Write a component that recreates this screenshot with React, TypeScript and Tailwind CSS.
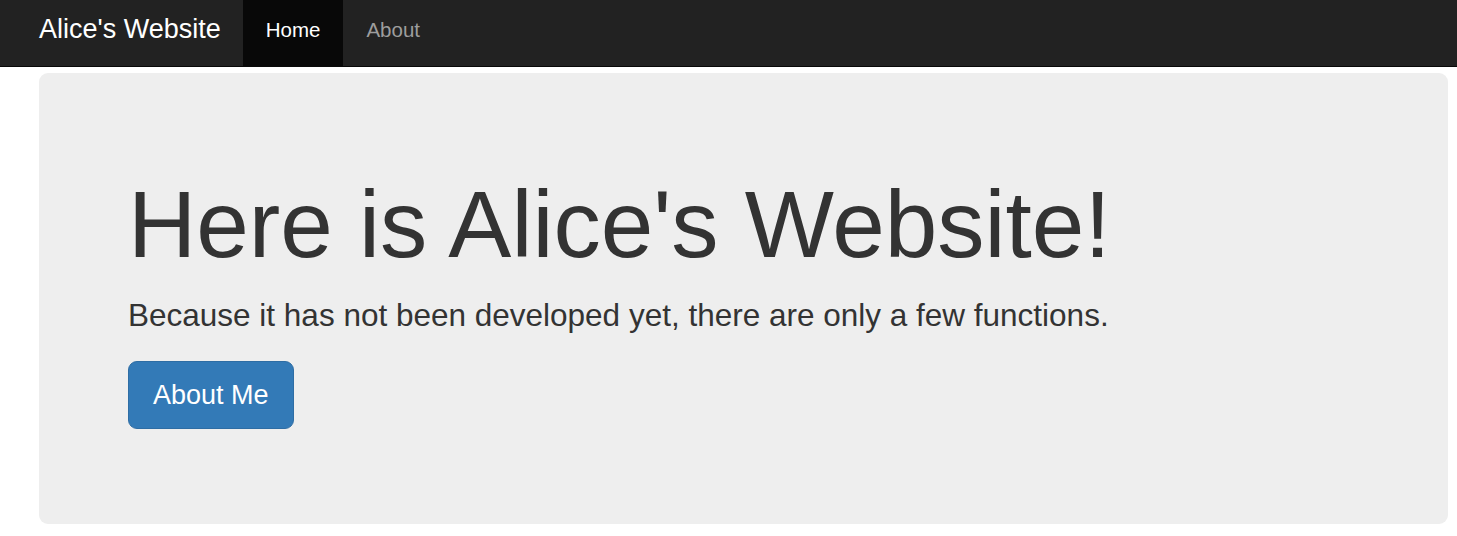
import React from "react";

function Navbar() {
  return (
    <nav className="flex h-[67px] border-b border-[#080808] bg-[#222222] pl-[17px]">
      <a href="#" className="px-[22px] pt-[14px] text-[27px] leading-[30px] text-white">
        Alice's Website
      </a>
      <ul className="flex">
        <li>
          <a href="#" className="block h-[66px] bg-[#080808] px-[23px] pt-[15px] text-[20.5px] leading-[30px] text-white">
            Home
          </a>
        </li>
        <li>
          <a href="#" className="block h-[66px] px-[23px] pt-[15px] text-[20.5px] leading-[30px] text-[#9d9d9d]">
            About
          </a>
        </li>
      </ul>
    </nav>
  );
}

function Jumbotron() {
  return (
    <div className="ml-[39px] mr-[9px] mt-[6px] rounded-[9px] bg-[#eeeeee] pb-[95px] pl-[89px] pt-[100px] text-[#333333]">
      <h1 className="text-[94.5px] leading-[1.1]">Here is Alice's Website!</h1>
      <p className="mt-[16px] text-[31.5px] leading-[44px]">
        Because it has not been developed yet, there are only a few functions.
      </p>
      <div className="mt-[24px]">
        <a
          href="#"
          className="inline-flex h-[68px] items-center rounded-[9px] border border-[#2e6da4] bg-[#337ab7] px-[24px] text-[27px] text-white"
        >
          About Me
        </a>
      </div>
    </div>
  );
}

export default function App() {
  return (
    <div className="min-h-screen bg-white font-['Liberation_Sans',Arial,sans-serif]">
      <Navbar />
      <Jumbotron />
    </div>
  );
}
